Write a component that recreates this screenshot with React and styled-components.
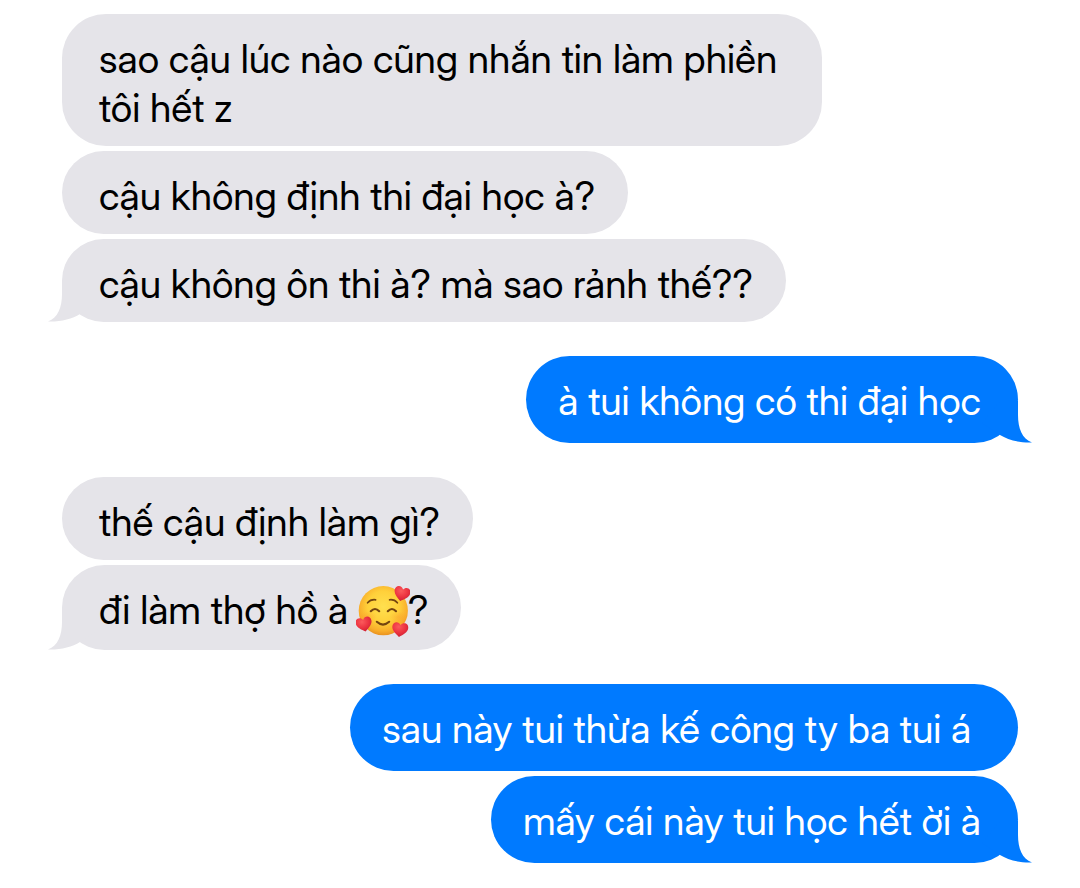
import React from 'react';
import styled, { createGlobalStyle } from 'styled-components';

const groups = [
    {
        mine: false,
        messages: [
            'sao cậu lúc nào cũng nhắn tin làm phiền tôi hết z',
            'cậu không định thi đại học à?',
            'cậu không ôn thi à? mà sao rảnh thế??',
        ],
    },
    { mine: true, messages: ['à tui không có thi đại học'] },
    {
        mine: false,
        messages: ['thế cậu định làm gì?', <>đi làm thợ hồ à <LoveFace />?</>],
    },
    {
        mine: true,
        messages: ['sau này tui thừa kế công ty ba tui á ', 'mấy cái này tui học hết ời à'],
    },
];

const App = () => {
    return (
        <>
            <GlobalStyle />
            <Thread>
                {groups.map((group, i) => (
                    <Group key={i} $mine={group.mine}>
                        {group.messages.map((text, j) => (
                            <Bubble key={j} $mine={group.mine}>
                                {text}
                                {/* only the last bubble of a group has a tail */}
                                {j === group.messages.length - 1 && (
                                    <Tail $mine={group.mine} viewBox="0 0 50 42" aria-hidden="true">
                                        <path d="M14 0V14C14 27 10 38 0 41.5C12 42 24 39 32 34L50 22L32 0Z" />
                                    </Tail>
                                )}
                            </Bubble>
                        ))}
                    </Group>
                ))}
            </Thread>
        </>
    );
};

export default App;

function Heart({ x, y, angle }) {
    return (
        <path
            transform={`translate(${x} ${y}) rotate(${angle})`}
            d="M0 7.6C-4 4.8 -8 2 -8 -2.2C-8 -7.4 -2 -8.2 0 -4.2C2 -8.2 8 -7.4 8 -2.2C8 2 4 4.8 0 7.6Z"
            fill="url(#heart)"
        />
    );
}

function LoveFace() {
    return (
        <Emoji viewBox="0 0 54 52" role="img" aria-label="🥰">
            <defs>
                <radialGradient id="face" cx="50%" cy="42%" r="58%">
                    <stop offset="0" stopColor="#ffe04f" />
                    <stop offset="0.55" stopColor="#ffd03a" />
                    <stop offset="0.85" stopColor="#f9ae2b" />
                    <stop offset="1" stopColor="#ea9220" />
                </radialGradient>
                <radialGradient id="blush">
                    <stop offset="0" stopColor="#f88a2c" stopOpacity="0.3" />
                    <stop offset="1" stopColor="#f8902c" stopOpacity="0" />
                </radialGradient>
                <radialGradient id="heart" cx="40%" cy="30%" r="70%">
                    <stop offset="0" stopColor="#fb5a5c" />
                    <stop offset="0.6" stopColor="#ec3340" />
                    <stop offset="1" stopColor="#cf2035" />
                </radialGradient>
            </defs>
            <circle cx="27.3" cy="24.7" r="24.6" fill="url(#face)" />
            <ellipse cx="12" cy="31" rx="9" ry="6" fill="url(#blush)" />
            <ellipse cx="42" cy="31" rx="9" ry="6" fill="url(#blush)" />
            <g fill="none" stroke="#744510" strokeLinecap="round">
                <path d="M11.6 16.8Q14.6 13.2 19.6 13.8" strokeWidth="1.7" />
                <path d="M33.6 13.8Q38.4 13.2 41.4 16.8" strokeWidth="1.7" />
                <path d="M14.8 25.2Q19 20.8 23.2 25.2" strokeWidth="2.2" />
                <path d="M31.8 25.2Q36 20.8 40 25.2" strokeWidth="2.2" />
                <path d="M20.8 35.8Q27 41.4 33.2 35.8" strokeWidth="2.1" />
            </g>
            <Heart x={46} y={7.6} angle={14} />
            <Heart x={8} y={38} angle={-12} />
            <Heart x={44} y={43.4} angle={8} />
        </Emoji>
    );
}

const GlobalStyle = createGlobalStyle`
    *{box-sizing:border-box;}
    body{
        margin:0;
        background:#fff;
        font-family:"Inter Display", Inter, "Noto Sans", sans-serif;
    }
`

const Thread = styled.main`
    display:flex;
    flex-direction:column;
    gap:34px;
    padding:14px 62px 25px;
`

const Group = styled.ul`
    display:flex;
    flex-direction:column;
    align-items:${(props) => (props.$mine ? 'flex-end' : 'flex-start')};
    gap:5px;
    margin:0;
    padding:0;
    list-style:none;
`

const Bubble = styled.li`
    position:relative;
    max-width:min(760px, 100%);
    padding:${(props) => (props.$mine ? '20px 37px 18px 32px' : '20px 33px 14px 37px')};
    border-radius:44px;
    background:${(props) => (props.$mine ? '#007aff' : '#e5e4e9')};
    color:${(props) => (props.$mine ? '#fff' : '#000')};
    fill:${(props) => (props.$mine ? '#007aff' : '#e5e4e9')};
    font-size:39px;
    line-height:49px;
    white-space:break-spaces;
`

const Tail = styled.svg`
    position:absolute;
    bottom:0;
    ${(props) => (props.$mine ? 'right' : 'left')}:-14px;
    width:50px;
    height:42px;
    transform:${(props) => (props.$mine ? 'scaleX(-1)' : 'none')};
`

const Emoji = styled.svg`
    width:54px;
    height:52px;
    margin:-2px;
    vertical-align:-12px;
`
